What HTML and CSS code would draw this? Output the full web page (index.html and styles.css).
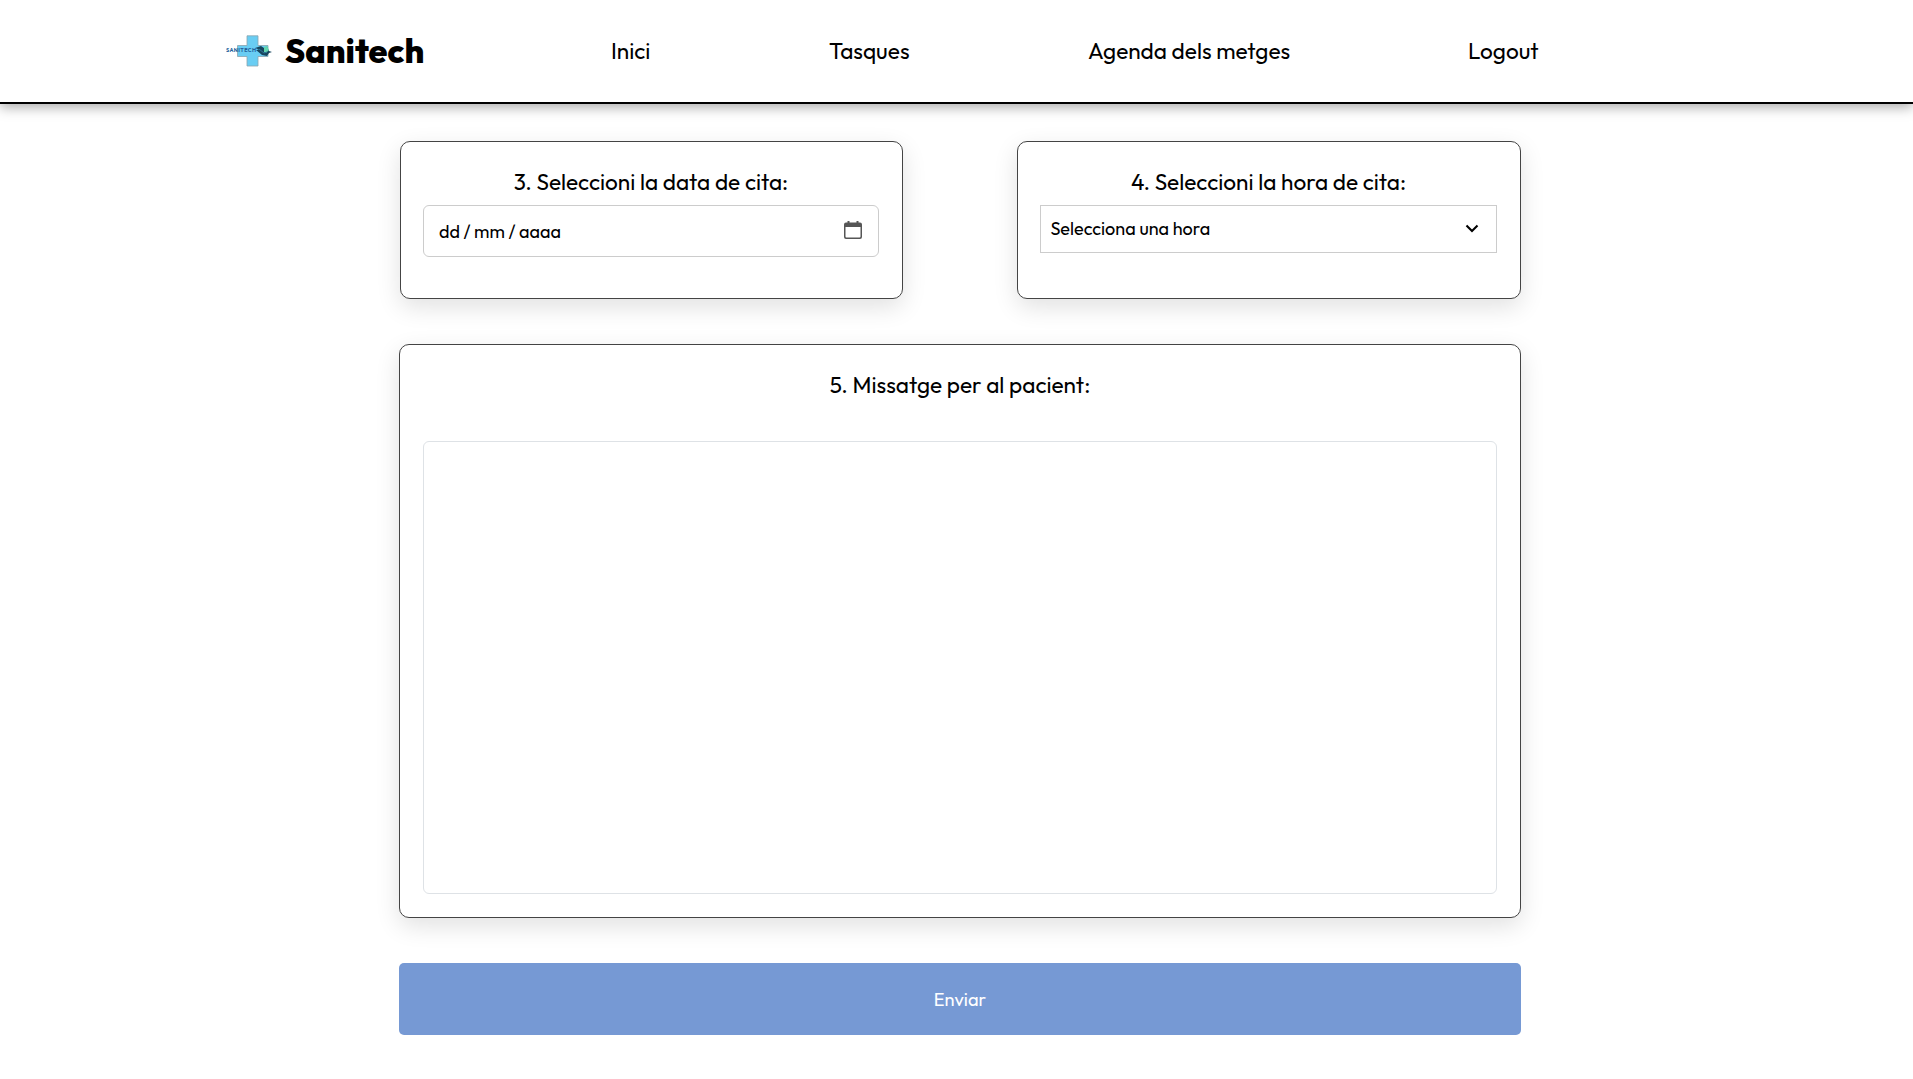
FILE: index.html
```html
<!DOCTYPE html>
<html lang="ca">
<head>
<meta charset="utf-8">
<title>Sanitech</title>
<link rel="stylesheet" href="styles.css">
</head>
<body>
<header class="header">
  <a class="brand">
    <svg class="logo" width="46" height="32" viewBox="0 0 46 32">
      <path d="M21 .8h11v9.700h10v11H32v9.500H21v-9.500H11.500v-11H21z" fill="#69cdf3" stroke="#8aa3ad" stroke-width=".8"/>
      <text class="logo-text" x="0" y="17.300" textLength="30">SANITECH</text>
      <path d="M29 13l6-2 3 2 3-1 2 4 3 1-3 1-2 3-5-1-6-5 3-.5z" fill="#17465f"/>
      <path d="M38 12l3-1 2 4-3 3-2-1z" fill="#62d5b0"/>
      <path d="M33 14l5 4 3-1" fill="none" stroke="#2c7799"/>
    </svg>
    <span class="brand-name">Sanitech</span>
  </a>
  <nav class="nav">
    <a class="inici">Inici</a>
    <a class="tasques">Tasques</a>
    <a class="agenda">Agenda dels metges</a>
    <a class="logout">Logout</a>
  </nav>
</header>
<main class="form">
  <div class="row">
    <section class="card">
      <h2 class="label">3. Seleccioni la data de cita:</h2>
      <div class="date">
        <span class="date-text">dd / mm / aaaa</span>
        <svg width="18" height="18" viewBox="0 0 18 18">
          <path d="M3.500 0h2v1.500h7V0h2v1.500H16q2 0 2 2V16q0 2-2 2H2q-2 0-2-2V3.500q0-2 2-2h1.500zM1.500 6v9.500q0 1 1 1h13q1 0 1-1V6z" fill="#565656" fill-rule="evenodd"/>
        </svg>
      </div>
    </section>
    <section class="card">
      <h2 class="label">4. Seleccioni la hora de cita:</h2>
      <div class="select">
        <span class="select-text">Selecciona una hora</span>
        <svg width="14" height="10" viewBox="0 0 14 10">
          <path d="M1.500 1.500L7 7l5.500-5.500" fill="none" stroke="#000" stroke-width="2.100"/>
        </svg>
      </div>
    </section>
  </div>
  <section class="card message">
    <h2 class="label message-label">5. Missatge per al pacient:</h2>
    <div class="textarea"></div>
  </section>
  <button class="send">Enviar</button>
</main>
</body>
</html>
```
FILE: styles.css
```css
* { box-sizing: border-box; }
body {
  margin: 0;
  height: 1079px;
  overflow: hidden;
  background: #fff;
  color: #000;
  font-family: Outfit, Inter, sans-serif;
}
.header {
  display: flex;
  align-items: center;
  height: 104px;
  padding-left: 226px;
  border-bottom: 2px solid #000;
  box-shadow: 0 3px 12px rgba(0, 0, 0, .35);
}
.brand { display: flex; align-items: center; width: 385px; gap: 13px; }
.logo-text { font: 700 5.500px Outfit, Inter, sans-serif; fill: #245f9b; }
.brand-name { margin-top: -2px; font-size: 34px; font-weight: 800; }
.nav { display: flex; gap: 177px; margin-top: -2px; font-size: 22.600px; white-space: nowrap; }
.inici { width: 41px; }
.tasques { width: 82px; }
.agenda { width: 203px; }
.form { width: 1122px; margin: 37px 0 0 399px; }
.row { display: flex; justify-content: space-between; padding-left: 1px; }
.card {
  width: 504px;
  height: 158px;
  padding: 22px 23px 22px 22px;
  border: 1px solid #444;
  border-radius: 10px;
  background: #fff;
  box-shadow: 0 8px 24px rgba(0, 0, 0, .12);
}
.row .card:first-child { width: 503px; }
.label {
  margin: 0;
  height: 41px;
  line-height: 36px;
  font-size: 22.600px;
  font-weight: 400;
  text-align: center;
}
.date, .select {
  display: flex;
  align-items: center;
  justify-content: space-between;
  border: 1px solid #ccc;
  font-size: 18px;
}
.date { height: 52px; padding: 0 16px 0 15px; border-radius: 6px; }
.date-text { word-spacing: -.2px; }
.date svg { margin-bottom: 2px; }
.select { height: 48px; padding: 0 17px 0 9.500px; }
.select svg { margin-bottom: 1px; }
.select-text { margin-top: -1px; }
.message { width: 1122px; height: 574px; margin-top: 45px; padding-left: 23px; }
.message-label { height: 74px; }
.textarea { height: 453px; border: 1px solid #dee2e6; border-radius: 6px; }
.send {
  display: block;
  width: 1122px;
  height: 72px;
  margin-top: 45px;
  border: 0;
  border-radius: 5px;
  background: #7699d4;
  color: #fff;
  font: 400 18.200px Outfit, Inter, sans-serif;
}
```
